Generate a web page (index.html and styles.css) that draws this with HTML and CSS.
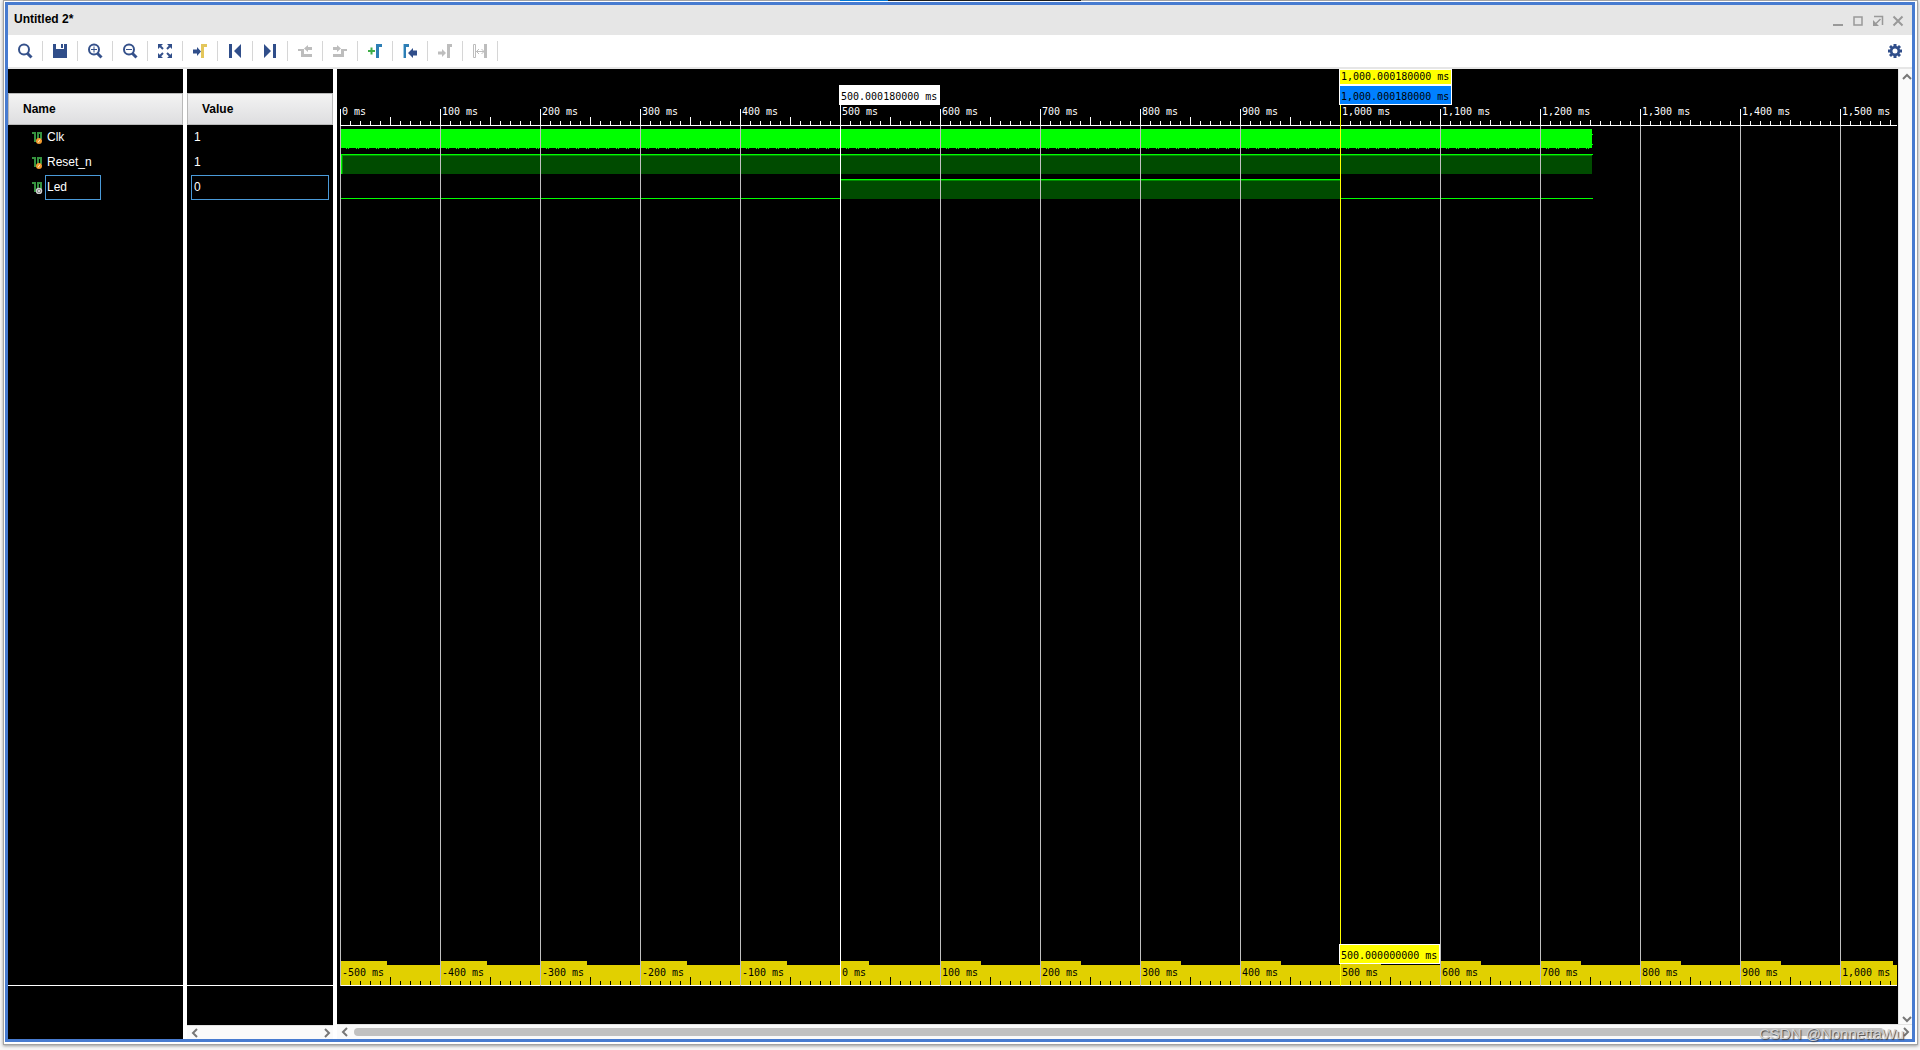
FILE: index.html
```html
<!DOCTYPE html>
<html lang="en">
<head>
<meta charset="utf-8">
<title>Untitled 2*</title>
<link rel="stylesheet" href="styles.css">
</head>
<body>
<div class="tab-strip"></div>
<div class="window">
<div class="frame">
  <header class="titlebar">
    <h1>Untitled 2*</h1>
    <div class="window-buttons">
      <button aria-label="Minimize"><svg width="12" height="12"><path d="M1 9.5h10" stroke-width="1"/><path d="M1 10.5h10"/></svg></button>
      <button aria-label="Maximize"><svg width="12" height="12"><rect x="2" y="2" width="8" height="8" stroke-width="1.5"/></svg></button>
      <button aria-label="Float"><svg width="12" height="12"><path d="M2 1.500h8.500V10M8.500 4L4 8.500" stroke-width="1.5"/><path d="M1 5v6h6z" fill="#999" stroke="none"/></svg></button>
      <button aria-label="Close"><svg width="12" height="12"><path d="M1.500 1.500l9 9M10.500 1.500l-9 9" stroke-width="2"/></svg></button>
    </div>
  </header>

  <div class="toolbar">
    <button aria-label="Find"><svg width="16" height="16"><circle cx="7" cy="6.500" r="5" class="line"/><path class="line thick" d="M10.500 10.500l4 4"/></svg></button>
    <button aria-label="Save"><svg width="16" height="16"><path class="solid" d="M1 1h3v5h8V1h3v14H1z"/><path class="solid" d="M9 1h2v4H9z"/></svg></button>
    <button aria-label="Zoom In"><svg width="16" height="16"><circle cx="7" cy="6.500" r="5" class="line"/><path class="line thick" d="M10.500 10.500l4 4"/><path class="line thin" d="M4 6.500h6M7 3.500v6"/></svg></button>
    <button aria-label="Zoom Out"><svg width="16" height="16"><circle cx="7" cy="6.500" r="5" class="line"/><path class="line thick" d="M10.500 10.500l4 4"/><path class="line thin" d="M4 6.500h6"/></svg></button>
    <button aria-label="Zoom Fit"><svg width="16" height="16"><path class="solid" d="M1 1h5L1 6zM15 1v5l-5-5zM1 15v-5l5 5zM15 15h-5l5-5z"/><path class="line" d="M3 3l3 3M13 3l-3 3M3 13l3-3M13 13l-3-3"/></svg></button>
    <button aria-label="Go to Cursor"><svg width="16" height="16"><path class="solid" d="M1 6.500h4V4l4 4.500L5 13v-2.500H1z"/><path d="M10.500 15V2.500H15" fill="none" stroke="#e3c65b" stroke-width="3"/></svg></button>
    <button aria-label="Go to Time 0"><svg width="16" height="16"><path class="solid" d="M2 1h3v14H2zM14 1v14L7 8z"/></svg></button>
    <button aria-label="Go to Last Time"><svg width="16" height="16"><path class="solid" d="M11 1h3v14h-3zM2 1v14l7-7z"/></svg></button>
    <button aria-label="Previous Transition" disabled><svg width="16" height="16"><path class="off-fill" d="M1 6h6v5h8v3H4V8H1zM7 5.500L11 2v2h4v3h-4v2z"/></svg></button>
    <button aria-label="Next Transition" disabled><svg width="16" height="16"><path class="off-fill" d="M15 6H9v5H1v3h11V8h3zM9 5.500L5 2v2H1v3h4v2z"/></svg></button>
    <button aria-label="Add Marker"><svg width="16" height="16"><path d="M1 8h7M4.500 4.500v7" fill="none" stroke="#3fae49" stroke-width="2"/><path d="M10.500 15V2.500H15" fill="none" stroke="#2d7eb5" stroke-width="3"/></svg></button>
    <button aria-label="Previous Marker"><svg width="16" height="16"><path d="M2.500 15V2.500H7" fill="none" stroke="#2d7eb5" stroke-width="3"/><path d="M1.500 1v14" stroke="#9cc8e2"/><path class="solid" d="M15 7.500h-4V5l-5 5 5 5v-2.500h4z"/></svg></button>
    <button aria-label="Next Marker" disabled><svg width="16" height="16"><path class="off" d="M11.500 15V2.500H15M1 10h4"/><path class="off-fill" d="M9 10L5 6v8z"/></svg></button>
    <button aria-label="Swap Cursors" disabled><svg width="16" height="16"><path class="off" d="M13.500 1v14"/><path d="M1.500 1.500h2v13h-2zM4 8.500h8M7 6L4.500 8.500 7 11M9.500 6L12 8.500 9.500 11" fill="none" stroke="#bdbdbd"/></svg></button>
    <button class="settings" aria-label="Settings"><svg width="16" height="16"><path class="solid" fill-rule="evenodd" d="M6.500 1h3v2l1 .5L12 2l2 2-1.500 1.500.5 1h2v3h-2l-.5 1L14 12l-2 2-1.500-1.500-1 .5v2h-3v-2l-1-.5L4 14l-2-2 1.500-1.500-.5-1H1v-3h2l.5-1L2 4l2-2 1.500 1.500 1-.5zM8 5.500a2.500 2.500 0 1 0 0 5 2.500 2.500 0 0 0 0-5z"/></svg></button>
  </div>

  <main class="panes">
    <section class="pane names">
      <table>
        <thead><tr><th>Name</th></tr></thead>
        <tbody>
          <tr><td><div class="cell"><svg width="11" height="12"><path class="pulse" d="M0 1h3v9M6 10V1h3v6"/><circle cx="7" cy="9" r="3" fill="#f29a2e"/><path d="M6 10.500L8 7.500" stroke="#fff0c8"/></svg><span class="field">Clk</span></div></td></tr>
          <tr><td><div class="cell"><svg width="11" height="12"><path class="pulse" d="M0 1h3v9M6 10V1h3v6"/><circle cx="7" cy="9" r="3" fill="#f29a2e"/><path d="M6 10.500L8 7.500" stroke="#fff0c8"/></svg><span class="field">Reset_n</span></div></td></tr>
          <tr><td><div class="cell"><svg width="11" height="12"><path class="pulse" d="M0 1h3v9M6 10V1h3v6"/><circle cx="7" cy="9" r="2.500" fill="#555" stroke="#ccc" stroke-width="1.500"/><circle cx="7" cy="9" r="1" fill="#fff"/></svg><span class="field selected">Led</span></div></td></tr>
        </tbody>
      </table>
      <div class="pane-foot"></div>
    </section>

    <section class="pane values">
      <table>
        <thead><tr><th>Value</th></tr></thead>
        <tbody>
          <tr><td><div class="cell"><span class="field">1</span></div></td></tr>
          <tr><td><div class="cell"><span class="field">1</span></div></td></tr>
          <tr><td><div class="cell"><span class="field selected">0</span></div></td></tr>
        </tbody>
      </table>
      <div class="pane-foot"></div>
      <div class="hscroll">
        <button aria-label="Scroll left"><svg width="10" height="10"><path d="M7 1L3 5l4 4"/></svg></button>
        <button aria-label="Scroll right"><svg width="10" height="10"><path d="M3 1l4 4-4 4"/></svg></button>
      </div>
    </section>

    <section class="wave">
      <div class="wave-body">
        <div class="scope">
          <ol class="ruler time-ruler">
            <li><span>0 ms</span></li><li><span>100 ms</span></li><li><span>200 ms</span></li><li><span>300 ms</span></li><li><span>400 ms</span></li><li><span>500 ms</span></li><li><span>600 ms</span></li><li><span>700 ms</span></li><li><span>800 ms</span></li><li><span>900 ms</span></li><li><span>1,000 ms</span></li><li><span>1,100 ms</span></li><li><span>1,200 ms</span></li><li><span>1,300 ms</span></li><li><span>1,400 ms</span></li><li><span>1,500 ms</span></li>
          </ol>
          <div class="plot">
            <svg class="traces" width="1254" height="75" shape-rendering="crispEdges">
              <defs><pattern id="edges" width="10" height="1" patternUnits="userSpaceOnUse"><path d="M6 0h1v1H6zM8 0h1v1H8z" fill="#0f0"/></pattern></defs>
              <path fill="#0f0" d="M1 3h1251v19H1zM1252 8h1v1h-1zM1252 18h1v1h-1z"/>
              <rect x="1" y="22" width="1251" height="1" fill="url(#edges)"/>
              <path fill="#004b00" d="M1 29h1251v19H1zM501 54h499v19H501z"/>
              <path fill="#008c00" d="M2 29h1250v1H2zM2 30h1v18H2zM501 54h499v1H501z"/>
              <path fill="#0f0" d="M1 28h1252v1H1zM1 29h1v19H1zM1 72h500v1H1zM501 53h499v1H501zM1000 72h253v1h-253z"/>
            </svg>
          </div>
          <ol class="ruler relative-ruler">
            <li><span>-500 ms</span></li><li><span>-400 ms</span></li><li><span>-300 ms</span></li><li><span>-200 ms</span></li><li><span>-100 ms</span></li><li><span>0 ms</span></li><li><span>100 ms</span></li><li><span>200 ms</span></li><li><span>300 ms</span></li><li><span>400 ms</span></li><li><span>500 ms</span></li><li><span>600 ms</span></li><li><span>700 ms</span></li><li><span>800 ms</span></li><li><span>900 ms</span></li><li><span>1,000 ms</span></li>
          </ol>
          <div class="grid-lines"></div>
          <div class="marker-line"></div>
          <div class="cursor-line"></div>
          <div class="flag marker-flag">500.000180000 ms</div>
          <div class="flag cursor-flag">1,000.000180000 ms</div>
          <div class="flag second-flag">1,000.000180000 ms</div>
          <div class="flag delta-flag">500.000000000 ms</div>
        </div>
        <div class="vscroll">
          <button aria-label="Scroll up"><svg width="10" height="10"><path d="M1 7l4-4 4 4"/></svg></button>
          <button aria-label="Scroll down"><svg width="10" height="10"><path d="M1 3l4 4 4-4"/></svg></button>
        </div>
      </div>
      <div class="hscroll">
        <button aria-label="Scroll left"><svg width="10" height="10"><path d="M7 1L3 5l4 4"/></svg></button>
        <div class="thumb"></div>
        <button aria-label="Scroll right"><svg width="10" height="10"><path d="M3 1l4 4-4 4"/></svg></button>
      </div>
    </section>
  </main>
</div>
</div>
<div class="watermark">CSDN @NonnettaWu</div>
</body>
</html>
```

FILE: styles.css
```css
* { box-sizing: border-box; }

body {
  margin: 0;
  min-height: 100vh;
  display: flex;
  flex-direction: column;
  position: relative;
  background: #f6f6f6;
  font: 12px/16px "Liberation Sans", Arial, sans-serif;
  color: #000;
}

button {
  display: flex;
  align-items: center;
  justify-content: center;
  margin: 0;
  padding: 0;
  border: 0;
  background: none;
}

svg { display: block; flex: none; }

/* Edge of the tabs behind the floating window */
.tab-strip {
  position: absolute;
  z-index: 1;
  top: 0;
  left: 840px;
  width: 241px;
  height: 1px;
  background: linear-gradient(90deg, #0078d7 48px, #1a1a1a 48px);
}

/* Window frame */
.window {
  flex: 1;
  display: flex;
  margin: 0 2px 5px 3px;
  padding: 1px 2px 2px 1px;
  border: 1px solid #a3a3a3;
  background: #fff;
  box-shadow: 0 1px 3px #999;
}

.frame {
  flex: 1;
  min-width: 0;
  display: flex;
  flex-direction: column;
  border: 3px solid #477bd0;
}

.titlebar {
  display: flex;
  justify-content: space-between;
  height: 30px;
  padding: 6px 4px 0 6px;
  background: #e6e6e6;
}

.titlebar h1 { margin: 0; font-size: 12px; line-height: 16px; }

.window-buttons { display: flex; height: 20px; }
.window-buttons button { width: 20px; }
.window-buttons svg { fill: none; stroke: #999; }

/* Toolbar */
.toolbar {
  display: flex;
  align-items: center;
  height: 34px;
  border-bottom: 2px solid #e6e6e6;
  background: #fff;
}

.toolbar button {
  width: 35px;
  height: 20px;
  border-right: 1px solid #d6d6d6;
}

.toolbar .settings { margin-left: auto; border: 0; }
.line { fill: none; stroke: #35518b; stroke-width: 2; }
.thin { stroke-width: 1; }
.thick { stroke-width: 3; }
.solid { fill: #304e8a; }
.off { fill: none; stroke: #bdbdbd; stroke-width: 3; }
.off-fill { fill: #bdbdbd; }

/* Name and value columns */
.panes { flex: 1; display: flex; gap: 4px; background: #fff; }

.pane {
  flex: none;
  display: flex;
  flex-direction: column;
  padding-top: 24px;
  background: #000;
}

.names { width: 175px; }
.values { width: 146px; }

table { width: 100%; border-collapse: separate; border-spacing: 0; }

th {
  height: 32px;
  padding: 0 14px;
  border: 1px solid #b9b9b9;
  background: linear-gradient(#f3f3f3, #dedee0);
  text-align: left;
}

td { height: 25px; padding: 0; color: #fff; }

.cell { display: flex; align-items: center; gap: 2px; }
.names .cell { padding-left: 24px; }
.values .cell { padding: 0 4px; }
.field { height: 25px; padding: 3px 1px; border: 1px solid transparent; }
.names .field { min-width: 56px; }
.values .field { flex: 1; padding-left: 2px; }
.selected { border-color: #4a9ad8; }
.pulse { fill: none; stroke: #36933f; stroke-width: 2; }

.pane-foot { height: 54px; margin-top: auto; border-top: 1px solid #fff; }
.values .pane-foot { height: 40px; }

/* Scroll bars */
.hscroll {
  display: flex;
  align-items: center;
  justify-content: space-between;
  height: 14px;
  padding: 0 1px 0 3px;
  border-top: 1px solid #e2e2e2;
  background: #fafafa;
}

.hscroll svg, .vscroll svg { fill: none; stroke: #777; stroke-width: 2; }

.thumb {
  flex: 1;
  height: 8px;
  margin: 0 17px 0 4px;
  border-radius: 4px;
  background: #c1c1c1;
}

.vscroll {
  flex: none;
  display: flex;
  flex-direction: column;
  align-items: center;
  justify-content: space-between;
  width: 14px;
  padding: 3px 0 0 2px;
  border-left: 1px solid #e6e6e6;
  background: #fafafa;
}

/* Waveform */
.wave { flex: 1; min-width: 0; display: flex; flex-direction: column; }
.wave .hscroll { height: 15px; }
.wave-body { flex: 1; display: flex; }

.scope {
  flex: 1;
  min-width: 0;
  display: flex;
  flex-direction: column;
  position: relative;
  padding: 37px 1px 38px 3px;
  background: #000;
  font: 10px/12px "DejaVu Sans Mono", "Liberation Mono", monospace;
}

.ruler {
  display: flex;
  margin: 0;
  padding: 0;
  overflow: hidden;
  list-style: none;
  border-bottom: 1px solid #fff;
}

.ruler li { flex: none; width: 100px; white-space: pre; }

/* Each label masks the tall tick when it is long enough to reach it */
.ruler span {
  display: inline-block;
  margin-left: 1px;
  padding: 0 3px 0 1px;
  vertical-align: top;
}

.time-ruler {
  height: 20px;
  color: #fff;
  background:
    linear-gradient(90deg, #fff 1px, transparent 1px) 0 100% / 10px 4px repeat-x,
    linear-gradient(90deg, #fff 1px, transparent 1px) 0 100% / 50px 8px repeat-x,
    linear-gradient(90deg, #fff 1px, transparent 1px) 0 100% / 100px 16px repeat-x;
}

.time-ruler span { height: 14px; background: #000; }

.plot { flex: 1; min-width: 0; overflow: hidden; }

.relative-ruler {
  height: 25px;
  background:
    linear-gradient(90deg, #000 1px, transparent 1px) 0 100% / 10px 4px repeat-x,
    linear-gradient(90deg, #000 1px, transparent 1px) 0 100% / 50px 8px repeat-x,
    linear-gradient(#e1d000, #e1d000) 0 100% / 100% 20px no-repeat;
}

.relative-ruler span {
  height: 20px;
  padding-top: 6px;
  background: #e1d000;
}

.grid-lines {
  position: absolute;
  inset: 57px 1px 38px 3px;
  background: repeating-linear-gradient(90deg, #c0c0c0 0 1px, transparent 1px 100px);
}

.marker-line, .cursor-line { position: absolute; width: 1px; bottom: 38px; }
.marker-line { top: 36px; left: 503px; background: #fff; }
.cursor-line { top: 17px; left: 1003px; background: #ff0; }

.flag {
  position: absolute;
  height: 20px;
  padding: 5px 2px 0 1px;
  border: 1px solid #fff;
  background: #ff0;
  white-space: pre;
}

.marker-flag { top: 16px; left: 502px; background: #fff; }
.cursor-flag { top: 0; left: 1002px; height: 16px; padding-top: 1px; }
.second-flag { top: 16px; left: 1002px; background: #0080ff; }
.delta-flag { bottom: 60px; left: 1002px; }

.watermark {
  position: absolute;
  right: 16px;
  bottom: 6px;
  font-size: 15px;
  line-height: 20px;
  color: #d4d4d4;
  text-shadow: 1px 1px 1px #444;
}
```
